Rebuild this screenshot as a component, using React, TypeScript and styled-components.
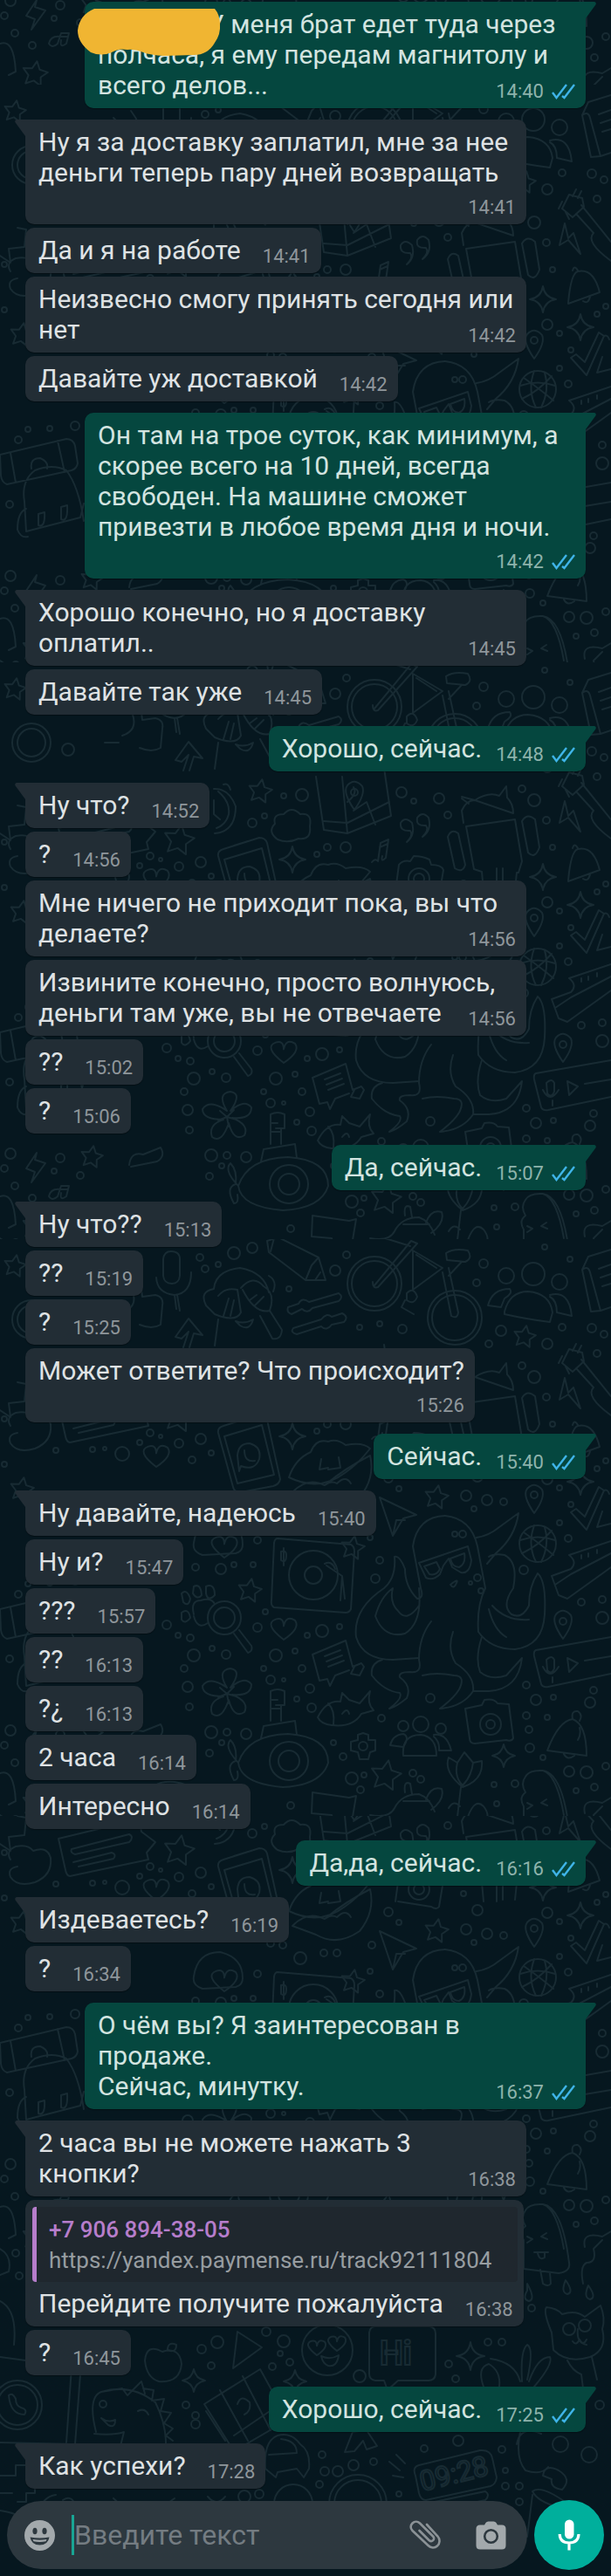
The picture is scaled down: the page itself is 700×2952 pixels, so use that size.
import React from "react";
import styled, { createGlobalStyle, css } from "styled-components";

const color = {
  page: "#06171f",
  doodle: "#182b33",
  incoming: "#222d35",
  outgoing: "#05473f",
  field: "#2d383f",
  accent: "#00af9c",
  ticks: "#3fb4e8",
};

const GlobalStyle = createGlobalStyle`
  *, *::before, *::after { box-sizing: border-box; }
  body {
    margin: 0;
    background: ${color.page};
    font-family: Roboto, "Noto Sans", sans-serif;
  }
`;

const Screen = styled.div`
  position: relative;
  isolation: isolate;
  overflow: hidden;
  padding: 2px 0 7px;
`;

const WallpaperLayer = styled.svg`
  position: absolute;
  inset: 0;
  z-index: -1;
  width: 100%;
  height: 100%;
`;

const Thread = styled.ol`
  list-style: none;
  margin: 0;
  padding: 0 29px;
`;

const Row = styled.li<{ $out?: boolean; $first?: boolean }>`
  display: flex;
  justify-content: ${(p) => (p.$out ? "flex-end" : "flex-start")};
  margin-top: ${(p) => (p.$first ? 13 : 4)}px;

  &:first-child {
    margin-top: 0;
  }
`;

const Bubble = styled.div<{ $out?: boolean; $first?: boolean }>`
  position: relative;
  max-width: 574px;
  padding: 8px 12px 6px 15px;
  border-radius: 10px;
  background: ${(p) => (p.$out ? color.outgoing : color.incoming)};
  color: ${(p) => (p.$out ? "#d3e4e0" : "#dfe2e4")};
  font-size: 30px;
  line-height: 35px;
  box-shadow: 0 1px 1px rgba(0, 0, 0, 0.35);
  ${(p) =>
    p.$first &&
    (p.$out
      ? css`
          border-top-right-radius: 0;
        `
      : css`
          border-top-left-radius: 0;
        `)}
`;

const Text = styled.span`
  white-space: pre-line;
`;

const TailShape = styled.svg<{ $out?: boolean }>`
  position: absolute;
  top: 0;
  ${(p) => (p.$out ? "left: 100%;" : "right: 100%;")}
`;

const Stamp = styled.span<{ $out?: boolean; $below?: boolean }>`
  display: flex;
  justify-content: flex-end;
  gap: 9px;
  ${(p) =>
    p.$below
      ? css`
          padding-top: 10px;
        `
      : css`
          float: right;
          padding-top: 12px;
          margin-left: ${p.$out ? 16 : 25}px;
        `}
  color: ${(p) => (p.$out ? "#8eb3ac" : "#8f969b")};
  font-size: 22px;
  line-height: 26px;
`;

const TicksIcon = styled.svg`
  margin-top: 4px;
`;

const Redaction = styled.span`
  position: relative;
  display: inline-block;
  width: 126px;
  height: 20px;
`;

const RedactionShape = styled.svg`
  position: absolute;
  left: -24px;
  top: -9px;
  z-index: 1;
`;

const Quote = styled.blockquote`
  margin: 0 -5px 7px -7px;
  padding: 9px 14px 7px;
  border-left: 5px solid #b67dcb;
  border-radius: 4px;
  background: #1f272e;
  color: #979da1;
  font-size: 26px;
`;

const QuoteAuthor = styled.cite`
  display: block;
  color: #b67dcb;
  font-style: normal;
  font-weight: 500;
`;

const QuoteLink = styled.a`
  display: block;
  color: inherit;
  text-decoration: none;
`;

const Composer = styled.form`
  display: flex;
  align-items: center;
  gap: 8px;
  padding: 13px 8px 0;
`;

const Field = styled.div`
  flex: 1;
  min-width: 0;
  height: 78px;
  display: flex;
  align-items: center;
  padding: 0 24px 0 20px;
  border-radius: 39px;
  background: ${color.field};
`;

const IconButton = styled.button`
  display: flex;
  flex: none;
  margin: 0;
  padding: 0;
  border: 0;
  background: none;
  color: #a3a9ac;
`;

const AttachButton = styled(IconButton)`
  margin-right: 40px;
`;

const Caret = styled.span`
  flex: none;
  width: 3px;
  height: 46px;
  margin-left: 19px;
  background: #19a594;
`;

const MessageInput = styled.input`
  flex: 1;
  min-width: 0;
  height: 46px;
  padding: 0;
  border: 0;
  outline: 0;
  background: none;
  color: #dfe2e4;
  font: 32px/46px Roboto, "Noto Sans", sans-serif;

  &::placeholder {
    color: #747c82;
    opacity: 1;
  }
`;

const VoiceButton = styled(IconButton)`
  width: 80px;
  height: 80px;
  align-items: center;
  justify-content: center;
  border-radius: 50%;
  background: ${color.accent};
  color: #fff;
`;

type Message = {
  text: string;
  time: string;
  out?: boolean;
  first?: boolean;
  below?: boolean;
  redacted?: boolean;
  quote?: { author: string; link: string };
};

const messages: Message[] = [
  { text: "У меня брат едет туда через полчаса, я ему передам магнитолу и всего делов...", time: "14:40", out: true, first: true, redacted: true },
  { text: "Ну я за доставку заплатил, мне за нее деньги теперь пару дней возвращать", time: "14:41", first: true, below: true },
  { text: "Да и я на работе", time: "14:41" },
  { text: "Неизвесно смогу принять сегодня или нет", time: "14:42" },
  { text: "Давайте уж доставкой", time: "14:42" },
  { text: "Он там на трое суток, как минимум, а скорее всего на 10 дней, всегда свободен. На машине сможет привезти в любое время дня и ночи.", time: "14:42", out: true, first: true, below: true },
  { text: "Хорошо конечно, но я доставку оплатил..", time: "14:45", first: true },
  { text: "Давайте так уже", time: "14:45" },
  { text: "Хорошо, сейчас.", time: "14:48", out: true, first: true },
  { text: "Ну что?", time: "14:52", first: true },
  { text: "?", time: "14:56" },
  { text: "Мне ничего не приходит пока, вы что делаете?", time: "14:56" },
  { text: "Извините конечно, просто волнуюсь, деньги там уже, вы не отвечаете", time: "14:56" },
  { text: "??", time: "15:02" },
  { text: "?", time: "15:06" },
  { text: "Да, сейчас.", time: "15:07", out: true, first: true },
  { text: "Ну что??", time: "15:13", first: true },
  { text: "??", time: "15:19" },
  { text: "?", time: "15:25" },
  { text: "Может ответите? Что происходит?", time: "15:26", below: true },
  { text: "Сейчас.", time: "15:40", out: true, first: true },
  { text: "Ну давайте, надеюсь", time: "15:40", first: true },
  { text: "Ну и?", time: "15:47" },
  { text: "???", time: "15:57" },
  { text: "??", time: "16:13" },
  { text: "?¿", time: "16:13" },
  { text: "2 часа", time: "16:14" },
  { text: "Интересно", time: "16:14" },
  { text: "Да,да, сейчас.", time: "16:16", out: true, first: true },
  { text: "Издеваетесь?", time: "16:19", first: true },
  { text: "?", time: "16:34" },
  { text: "О чём вы? Я заинтересован в продаже.\nСейчас, минутку.", time: "16:37", out: true, first: true },
  { text: "2 часа вы не можете нажать 3 кнопки?", time: "16:38", first: true },
  {
    text: "Перейдите получите пожалуйста",
    time: "16:38",
    quote: { author: "+7 906 894-38-05", link: "https://yandex.paymense.ru/track92111804" },
  },
  { text: "?", time: "16:45" },
  { text: "Хорошо, сейчас.", time: "17:25", out: true, first: true },
  { text: "Как успехи?", time: "17:28", first: true },
];

function Tail({ out }: { out?: boolean }) {
  return (
    <TailShape $out={out} width="12" height="19" viewBox="0 0 12 19" aria-hidden="true">
      {out ? (
        <path d="M0 0H10Q13 1 11 4L0 19Z" fill={color.outgoing} />
      ) : (
        <path d="M12 0H2Q-1 1 1 4L12 19Z" fill={color.incoming} />
      )}
    </TailShape>
  );
}

function Ticks() {
  return (
    <TicksIcon width="27" height="18" viewBox="0 0 27 18" fill="none" stroke={color.ticks} strokeWidth="2.4" role="img" aria-label="Прочитано">
      <path d="M1 10L5.5 16L17 1" />
      <path d="M12 14L14.500 16L26 1" />
    </TicksIcon>
  );
}

function MessageRow({ message }: { message: Message }) {
  const { text, time, out, first, below, redacted, quote } = message;
  return (
    <Row $out={out} $first={first}>
      <Bubble $out={out} $first={first}>
        {first && <Tail out={out} />}
        {quote && (
          <Quote>
            <QuoteAuthor>{quote.author}</QuoteAuthor>
            <QuoteLink href={quote.link}>{quote.link}</QuoteLink>
          </Quote>
        )}
        {redacted && (
          <Redaction>
            <RedactionShape width="166" height="56" viewBox="0 0 166 56" aria-hidden="true">
              <path
                d="M20 1H158Q164 8 164 19Q165 30 158 40Q150 54 134 54L100 55Q84 54 76 51Q66 47 58 48Q48 46 40 51Q28 56 16 51Q1 40 1 26Q3 8 20 1Z"
                fill="#f0b532"
              />
            </RedactionShape>
          </Redaction>
        )}
        <Text>{text}</Text>
        <Stamp $out={out} $below={below}>
          <time>{time}</time>
          {out && <Ticks />}
        </Stamp>
      </Bubble>
    </Row>
  );
}

/* Dots sprinkled between the doodles: x, y, radius. */
const dots: [number, number, number][] = [
  [268, 16, 7], [289, 10, 6], [229, 21, 4], [235, 34, 4], [250, 29, 3], [384, 36, 6], [397, 18, 4], [331, 57, 3],
  [574, 105, 6], [627, 120, 6], [644, 101, 4], [678, 102, 5], [560, 120, 4], [461, 103, 5], [435, 97, 3], [412, 101, 3],
  [546, 50, 4], [554, 28, 5], [653, 23, 3], [624, 9, 3], [692, 109, 4], [684, 131, 4], [598, 145, 4], [612, 158, 7],
  [346, 152, 7], [325, 153, 3], [460, 149, 6], [503, 156, 6], [474, 159, 3], [513, 175, 4], [626, 181, 4], [289, 184, 5],
  [303, 176, 3], [375, 212, 4], [396, 212, 6], [363, 220, 3], [633, 212, 3], [172, 222, 4], [205, 234, 5], [230, 229, 6],
  [184, 226, 2], [160, 233, 3], [64, 242, 3], [106, 241, 3], [120, 240, 2], [140, 246, 8], [220, 253, 4], [5, 206, 3],
  [5, 258, 3], [242, 245, 3], [531, 253, 3], [547, 272, 6], [627, 275, 6], [684, 263, 3], [694, 254, 3], [641, 285, 3],
  [445, 274, 5], [457, 286, 3], [534, 294, 6], [558, 299, 6], [577, 301, 4], [543, 309, 3], [654, 304, 3], [426, 312, 4],
  [344, 327, 7], [371, 321, 4], [386, 321, 4], [310, 310, 4], [324, 312, 4], [295, 345, 4], [641, 325, 3], [651, 343, 4],
  [424, 342, 3], [435, 368, 4], [430, 389, 5], [224, 376, 4], [253, 378, 6], [268, 373, 3], [290, 373, 3], [600, 379, 5],
  [547, 388, 4], [539, 394, 2], [551, 403, 3], [32, 395, 3], [57, 394, 3], [86, 391, 5], [21, 407, 4], [690, 413, 4],
  [666, 416, 4], [304, 427, 3], [295, 445, 5], [369, 449, 7], [389, 444, 3], [352, 454, 3], [191, 442, 5], [204, 454, 3],
  [218, 457, 4], [690, 434, 7], [11, 481, 4], [222, 477, 7], [243, 469, 3], [259, 476, 5], [316, 477, 7], [338, 472, 3],
  [211, 492, 4], [302, 492, 3], [346, 492, 4], [310, 505, 5], [325, 505, 2], [215, 513, 6], [355, 515, 5], [340, 527, 3],
  [357, 537, 5], [217, 536, 4], [493, 526, 5], [603, 511, 4], [614, 528, 6], [634, 525, 3], [680, 517, 4], [676, 531, 6],
  [603, 546, 4], [627, 548, 3], [437, 549, 4], [606, 562, 4], [607, 583, 5], [622, 594, 3], [242, 565, 7], [260, 565, 4],
  [282, 567, 6], [254, 577, 3], [240, 589, 4], [382, 577, 3], [393, 593, 4], [403, 618, 7], [417, 614, 3], [413, 631, 4],
  [473, 612, 4], [482, 619, 4], [566, 625, 3], [590, 624, 4], [569, 647, 3], [652, 610, 6], [672, 611, 7], [660, 632, 3],
  [681, 628, 4], [694, 604, 4], [333, 649, 4], [12, 563, 6], [5, 580, 4], [62, 583, 3], [69, 568, 5], [17, 600, 4],
  [37, 614, 4], [92, 588, 4], [18, 665, 4], [22, 691, 4], [609, 728, 4], [249, 767, 7], [231, 775, 5], [305, 755, 5],
  [325, 766, 7], [321, 780, 3], [242, 794, 4], [312, 795, 4], [332, 790, 4], [559, 767, 4], [575, 767, 4], [514, 792, 4],
  [522, 809, 4], [412, 806, 7], [213, 839, 4], [224, 851, 4], [224, 861, 5], [687, 839, 5], [525, 880, 6], [486, 889, 4],
  [575, 890, 4], [642, 884, 9], [675, 896, 9], [369, 896, 4], [405, 908, 6], [428, 904, 4], [372, 915, 5], [387, 915, 6],
  [579, 914, 3], [579, 932, 4], [595, 932, 4], [366, 930, 4], [457, 941, 3], [280, 944, 7], [297, 941, 5], [595, 950, 4],
];

const starPath = (x: number, y: number, r: number) => {
  const points = Array.from({ length: 10 }, (_, i) => {
    const radius = i % 2 ? r * 0.5 : r;
    const angle = (i * Math.PI) / 5 - 1.4;
    return `${(x + radius * Math.cos(angle)).toFixed(1)} ${(y + radius * Math.sin(angle)).toFixed(1)}`;
  });
  return `M${points.join("L")}Z`;
};

const sparklePath = (x: number, y: number, r: number) =>
  `M${x} ${y - r}Q${x + 2} ${y - 2} ${x + r} ${y}Q${x + 2} ${y + 2} ${x} ${y + r}Q${x - 2} ${y + 2} ${x - r} ${y}Q${x - 2} ${y - 2} ${x} ${y - r}Z`;

const heartPath = (x: number, y: number, r: number) =>
  `M${x} ${y + r}Q${x - r * 1.8} ${y - r * 0.4} ${x - r * 0.7} ${y - r * 0.8}Q${x} ${y - r} ${x} ${y - r * 0.2}Q${x + r * 0.2} ${y - r * 1.2} ${x + r} ${y - r * 0.7}Q${x + r * 1.5} ${y} ${x} ${y + r}Z`;

const pinPath = (x: number, y: number) => `M${x} ${y + 18}Q${x - 14} ${y - 2} ${x - 8} ${y - 10}Q${x} ${y - 19} ${x + 9} ${y - 9}Q${x + 13} ${y} ${x} ${y + 18}Z`;

const stars: [number, number, number][] = [
  [601, 112, 13], [298, 148, 14], [205, 204, 18], [500, 296, 14], [404, 354, 14], [286, 403, 14], [442, 615, 18], [105, 567, 13],
  [17, 31, 13], [40, 647, 15], [25, 287, 14],
];
const sparkles: [number, number, number][] = [
  [335, 226, 15], [622, 246, 15], [665, 278, 15], [577, 592, 13], [539, 783, 16], [222, 811, 13], [338, 812, 13],
];
const hearts: [number, number, number][] = [
  [179, 248, 13], [325, 446, 13], [257, 352, 13], [363, 773, 9], [386, 768, 9],
];

/* Line drawings of the chat wallpaper. */
const doodles = [
  // microphone, crayon, monkey, sliders
  "M187 23Q188 14 196 14Q206 14 206 23V42Q205 51 197 51Q188 51 187 42ZM179 44Q180 62 200 64Q219 62 219 38M203 64L206 82M200 64L202 80",
  "M306 2L319 -2L365 21L373 47L350 47L308 15ZM314 -1L310 14M350 47L357 30L365 21M361 47L367 38",
  "M245 57Q247 36 275 33Q303 38 308 61M245 57Q228 60 236 76L246 86Q270 96 276 84L272 58Q258 55 250 65M276 56Q290 40 302 54Q316 62 309 82Q292 86 278 58M250 92L246 122M309 82L323 104Q322 116 312 114L298 88M270 94Q280 98 290 92Q286 106 275 99ZM308 42Q318 48 313 60M256 88L262 68M264 88L268 70M286 70L294 64M292 76L302 66",
  "M330 78L342 74Q346 66 354 72L388 62Q394 66 388 71L358 79Q352 86 346 80L334 86Q328 84 330 78ZM336 102L368 92Q374 84 380 89L392 85Q400 89 394 95L380 98Q374 106 368 100L340 109Q332 107 336 102Z",
  // bicycle
  "M429 53L471 2L478 5L433 55Q427 57 427 49M473 13L507 33L473 58ZM477 18L500 33M507 38L517 88Q524 92 525 84L514 33M511 16Q520 10 536 13Q542 22 533 26L512 24ZM528 27L514 42M466 62Q474 54 478 66Q474 76 466 70ZM464 70L460 78L474 86M438 -2L470 8",
  // people
  "M578 83Q584 60 605 60Q630 62 633 84L630 95Q605 92 578 86ZM559 76Q564 57 584 57Q588 62 578 68L574 78ZM630 64Q652 58 655 88L638 84Q638 70 630 66M447 580Q450 568 462 567Q470 570 462 582ZM462 592Q460 568 482 568Q500 570 500 592ZM497 568Q512 566 517 586L503 586Q504 576 497 570",
  // notebook
  "M700 12L674 20L667 35L677 83L688 82L700 78M667 35Q674 30 676 38L688 82M686 34L700 29M688 44L700 40M690 54L700 51",
  // arrow, thumb
  "M201 112L216 91L232 110L222 108L217 124M201 112L208 114L216 106L210 124M150 30Q162 45 163 66L178 64Q188 66 186 76L184 98Q174 104 160 98M130 38L152 60Q158 78 140 84M120 92H136",
  // guitar
  "M644 142L652 126L667 130L669 140L656 152ZM666 138L700 180M660 148L680 170Q670 180 700 202M656 128L660 120M662 130L666 122M648 146L652 154M644 134L640 142",
  // android
  "M531 184L529 170Q534 158 544 158L529 154M544 158Q560 148 572 153L580 142L581 155Q588 162 588 173ZM529 156L537 162M534 188L590 180L598 228L594 241H592L590 260M534 188L543 237L552 240L554 262M569 236V262M576 236V260M513 200Q517 190 525 196L533 232Q530 242 521 236ZM598 182Q604 172 613 180L618 212Q613 226 605 218Z",
  "M647 159L641 184L651 178L665 194L657 170L651 176Z",
  "M651 250Q654 216 662 214Q680 210 687 238L651 251M656 213Q658 206 662 213M668 248Q674 252 676 243M627 586Q640 552 656 550Q672 556 672 592ZM656 550Q654 540 662 541Q668 545 664 552M646 590Q650 598 658 592M664 560Q666 568 662 574",
  // map
  "M362 131L371 192L398 196L448 176L440 121M371 182L398 184L446 160M392 131L398 196M405 170L420 160L430 186M398 160Q410 150 405 143",
  // phone
  "M250 222Q249 216 256 214L297 201Q304 201 306 207L321 275Q320 281 313 283L276 290Q268 290 267 284ZM257 226L300 213L314 270L272 280ZM268 210L284 205M272 248Q273 234 286 234Q300 238 297 252Q292 266 276 260L274 266ZM280 242Q280 256 292 254",
  // cloud and clock
  "M318 203Q306 194 315 185Q312 174 325 174Q334 164 344 174Q358 172 355 188Q357 204 342 202Q330 208 318 203Z",
  "M245 145Q262 144 270 165Q270 194 246 196M250 148Q264 160 262 174Q259 186 248 190M245 158V174L252 180M256 140Q262 138 264 146",
  "M466 206Q474 198 470 193Q458 194 459 184Q464 176 472 184Q476 198 466 206ZM484 200Q492 192 488 187Q476 188 478 178Q484 170 491 178Q495 192 484 200Z",
  "M426 229Q430 224 433 228L436 207L445 203L442 224Q436 230 438 222M435 212L444 208",
  "M70 604Q58 602 56 612Q60 618 66 612L70 600L79 600L76 612Q68 618 70 608M70 604H78",
  // camera
  "M453 262L457 232Q462 226 470 228L474 222Q484 222 492 226L494 232Q506 232 508 238L503 268Q500 272 494 268L456 262M533 538L552 534L555 528Q566 526 570 532L583 533L588 572Q586 576 580 574L544 578Q538 578 538 572Z",
  // lips
  "M331 273Q338 252 356 244Q362 228 376 232Q386 228 396 236Q416 232 424 240Q410 258 395 268Q366 290 331 273ZM335 290Q352 272 372 282Q396 262 424 248Q430 274 412 296Q386 314 362 300ZM368 252L366 264L376 262M376 264L390 262L388 250M372 282Q380 276 386 280Q396 270 402 280",
  // cards
  "M67 190L150 170Q160 168 162 182L178 194L168 206L170 214L80 233Q76 232 75 226ZM82 202L148 185Q154 188 148 194L86 208Q80 206 82 202ZM84 217L128 206Q134 208 130 213L90 222",
  "M12 214Q6 204 18 199Q32 196 38 204Q54 198 58 212Q60 232 40 240Q20 246 12 234Q8 224 20 222",
  "M0 196L12 204L10 188L28 186L30 166L20 164",
  "M435 296L477 316L462 320L450 340ZM450 340L454 322L464 322",
  "M654 313L672 333L692 288Q696 286 698 292M654 313L660 309L670 318L686 284L692 288M684 330L690 312M684 330L700 326",
  // octopus
  "M482 400L473 352Q478 318 510 317Q540 320 547 352L556 400Q546 420 548 450Q562 470 590 470Q622 466 624 430Q626 392 616 383Q606 398 606 420Q598 436 586 430Q574 420 588 400Q594 370 578 362Q566 360 560 364M546 342Q560 340 572 330L594 314Q590 342 568 360L558 372M482 400Q486 412 478 412Q464 398 464 378Q458 362 452 364Q454 388 440 400Q404 424 408 456Q416 482 450 482L480 480M480 400Q484 440 464 452Q440 458 430 432Q436 410 450 400Q446 416 456 426Q466 440 480 420",
  "M494 438Q480 456 480 482Q484 498 470 496Q456 496 458 502Q472 512 466 526Q454 536 446 538Q462 526 458 520Q440 518 426 500Q424 486 438 482M519 450Q512 470 522 486Q544 500 542 518Q530 536 504 538Q520 526 526 516Q534 500 520 500Q500 496 484 500M552 456Q544 480 550 496Q562 506 580 500L598 480Q594 516 560 518L543 518M564 420Q580 438 606 436M560 424Q566 448 580 456",
  "M480 371L536 352L540 368Q538 384 528 382L518 376L514 366L508 374L504 384Q496 392 488 388ZM486 375L500 370L504 378Q500 386 492 384ZM516 366L532 360Q534 372 526 376Q518 376 516 366ZM516 396Q526 388 523 394Q520 402 516 396",
  "M596 345Q616 338 636 345M612 328Q604 350 614 370M624 330Q630 350 620 370M600 336Q620 350 634 362M598 360Q616 352 632 334",
  // turntable
  "M318 343L402 350Q406 352 406 358L402 424Q400 428 396 428L314 422Q310 420 311 414L314 348Q315 343 318 343ZM325 354V374M322 358Q328 356 328 362Q328 372 322 368ZM374 374L392 386L390 414M392 386L395 412M372 372Q380 368 384 378",
  "M222 348Q226 320 252 320Q278 326 278 350Q278 358 270 360L232 362Q220 358 222 348",
  "M222 430Q218 414 230 414Q242 410 246 418M238 440Q226 448 222 432M208 406Q214 400 218 412Q216 422 210 416ZM222 398Q230 394 231 408Q226 414 221 406ZM236 398Q246 394 246 408Q238 416 236 406ZM208 428Q216 422 218 434Q212 442 208 436ZM268 452L284 474Q290 472 288 466L274 448",
  "M358 476L396 460L404 490L414 486L417 490L412 500L402 498L406 490M358 476L366 506L375 504L378 512L384 500L400 494M372 478L390 471M374 484L392 477M376 490L394 483",
  // flower
  "M260 514Q248 494 264 492Q278 494 264 514Q280 500 288 510Q288 524 266 522Q286 530 280 542Q268 550 262 528Q254 552 243 544Q238 530 256 524Q232 524 232 512Q240 500 260 514M260 521L252 514M260 521L268 513M260 521L262 532M260 521L250 525M260 521L271 524",
  // voice message, shoe
  "M700 456L614 471Q611 472 612 478L620 510Q622 514 628 513L700 498M626 482Q632 476 635 482V492Q632 500 627 494ZM622 490Q630 506 640 490M633 502V508M650 480L662 486L652 496ZM670 483L700 478",
  "M652 362L700 346M652 362Q662 370 654 378L632 386L640 408L650 412L700 376M636 396L654 384L700 360M666 366V362M674 364V360M684 360V356",
  // fish and ornament
  "M364 548Q374 528 390 530L392 520L400 528L412 532L424 518Q420 532 428 540L414 544Q404 560 380 557Q368 556 364 548M376 532Q384 540 382 556M392 544Q398 536 400 544",
  "M310 518Q318 514 326 518V534H316M310 518V552M322 534V552M310 528H318M310 538H322M299 572L302 558L338 552L340 568M273 600Q284 568 330 567Q376 570 376 600Q368 626 324 628Q276 624 273 600ZM273 600Q256 582 264 574Q272 582 270 598Q258 602 268 620Q274 620 272 610",
  "M416 566L422 568L422 574L430 574L430 586L424 588L422 596L412 596L410 588L402 586V576L410 574L410 568Z",
  // tulip, ticket, turtle
  "M530 628Q508 610 514 594L524 600L532 588L542 600L552 598Q554 620 530 628ZM524 600Q520 616 530 626M542 600Q540 616 530 626M528 628L524 662M514 652Q520 642 527 650M536 662Q544 640 554 650Q562 660 556 668",
  "M358 634L400 640L408 638L404 662M358 634L357 658L380 660L384 674L392 662M424 660Q446 664 452 652Q460 636 480 636Q492 640 498 656M464 634Q462 620 470 624L472 636M488 642Q494 626 506 630Q510 642 494 654M462 644H492",
  // ice cream
  "M602 616Q606 608 622 609Q644 612 652 676Q654 686 640 688L600 683V650Q594 640 602 634Q596 624 602 616M622 609Q638 614 646 660M604 646L610 649L604 653M626 642L620 646L627 649M612 664H628M616 665Q618 674 624 670V664M619 684L622 700Q628 704 631 700L630 687",
  // backpack
  "M0 424L76 406Q84 406 86 414L89 434Q88 440 82 442L8 458Q2 456 1 448ZM12 422L18 456M66 408L74 444M28 478Q24 454 40 442Q60 434 76 442Q90 460 96 500M30 486Q20 490 20 510Q24 520 32 518M28 478L30 512L92 496L96 480M44 492V505Q52 508 51 490ZM70 484V498Q78 502 77 482ZM36 440Q34 428 46 428Q56 432 54 440",
  "M42 562L30 580L40 584L36 596L52 574L40 570ZM148 576Q150 560 164 564L184 556Q190 566 180 572L150 578",
  "M98 656Q106 632 132 628L164 636M130 640Q150 640 162 650M170 640Q172 620 200 622Q230 626 238 656M176 636Q200 622 214 638",
  "M0 612Q16 606 18 644L10 648M0 660Q14 668 10 686L0 690M0 720Q20 730 16 770M670 658Q666 640 690 646L700 640",
  // cat, plant and chat card
  "M632 756Q622 732 626 727Q638 728 644 735Q660 730 670 738L688 725Q694 740 690 752Q696 776 676 784Q650 792 634 776ZM650 788Q656 800 666 804L668 820M678 784L684 810M656 766Q660 772 664 764Q668 772 672 764",
  "M554 818Q546 796 560 792Q574 800 572 818M562 786Q590 790 596 812M598 812Q596 776 604 770Q612 774 604 810M606 812Q616 784 630 784Q634 792 612 818",
  "M430 749H492Q499 750 499 757V804Q498 811 491 811H456L444 822L440 811H430Q423 810 423 803V756Q424 749 430 749Z",
  // face, play, apple, dinosaur
  "M368 783Q378 788 388 782Q386 796 376 794Q370 792 368 783Z",
  "M272 755L300 773L267 797Z",
  "M186 778Q168 768 166 788Q168 808 182 812Q206 814 208 792Q206 772 186 778ZM192 776Q192 766 202 770Q202 780 192 776",
  "M110 870Q100 830 116 824Q150 814 178 836Q190 860 190 883M116 824L140 820L146 828L162 812L166 826M164 820L176 822L174 834L188 832L184 846L196 848L188 860L198 866L190 874L198 880M116 854Q124 860 132 856Q132 866 124 862ZM108 872Q130 874 142 870L138 886M158 846Q166 842 170 850",
  "M0 784L88 796Q92 798 92 804L86 884L0 882M82 796L76 882M10 828Q12 850 28 850Q32 844 24 842Q18 840 18 832Q14 824 10 828",
  "M234 838L298 798L330 856L268 892ZM252 822L284 880M278 806L310 868M272 838Q276 826 286 836Q288 846 280 850M268 874L318 840M258 880L236 846",
  "M304 912Q302 880 318 874Q334 870 344 884Q356 892 354 912L348 922L340 912L318 916L316 922ZM308 896L340 894Q340 880 322 878",
  "M395 893L404 870L420 868L432 886L420 890L416 880L406 892Z",
  "M476 920Q472 910 480 908L550 891Q562 890 564 900L569 922Q568 930 562 932L488 948Q482 948 480 940ZM488 952L556 938Q562 942 556 948L510 958M446 904L458 914M450 920L462 922M454 896L464 906",
  // basket and blobs along the lower edge
  "M610 938Q620 930 650 952Q650 960 640 956Q616 950 610 938ZM610 942L604 990M596 870Q590 900 602 914Q620 920 628 910M622 920Q624 906 640 914Q656 924 644 936Q630 934 632 924ZM662 752Q660 768 672 770M592 884Q596 862 620 872",
  "M0 920H18V908H30V922H40V940H30V950H20M0 940H14M0 960Q30 964 30 980M44 964Q48 944 64 942M72 948Q84 940 88 960M130 946Q160 976 200 946M238 944Q248 956 258 944M250 952V980",
  "M668 700Q664 680 672 676Q684 676 680 660L690 650M604 708Q598 718 606 720Q614 718 604 700ZM648 696Q642 710 650 712Q658 710 648 696ZM674 702Q668 716 676 718Q684 716 674 702Z",
];

const rings: [number, number, number][] = [
  [429, 51, 31], [429, 51, 26], [521, 90, 31], [521, 90, 26], [611, 40, 13], [580, 42, 9], [641, 49, 9], [480, 248, 12],
  [480, 248, 6], [359, 385, 28], [359, 385, 10], [616, 349, 21], [257, 434, 19], [257, 434, 12], [331, 598, 22],
  [331, 598, 12], [416, 581, 5], [482, 556, 9], [462, 558, 6], [505, 561, 6], [562, 556, 12], [562, 556, 5], [375, 776, 29],
  [20, 839, 28], [20, 839, 23], [410, 952, 33], [410, 952, 27], [336, 952, 22], [652, 752, 7], [670, 748, 7], [118, 838, 4],
  [612, 293, 4], [645, 438, 4], [406, 149, 4], [521, 338, 3], [530, 338, 4], [36, 92, 22], [36, 92, 16], [78, 100, 7],
];

function Wallpaper() {
  return (
    <WallpaperLayer aria-hidden="true">
      <defs>
        <g id="doodles" fill="none" stroke={color.doodle} strokeWidth="2" strokeLinejoin="round" strokeLinecap="round">
          {doodles.map((d, i) => (
            <path key={i} d={d} />
          ))}
          {stars.map(([x, y, r], i) => (
            <path key={i} d={starPath(x, y, r)} />
          ))}
          {sparkles.map(([x, y, r], i) => (
            <path key={i} d={sparklePath(x, y, r)} />
          ))}
          {hearts.map(([x, y, r], i) => (
            <path key={i} d={heartPath(x, y, r)} />
          ))}
          <path d={pinPath(612, 296)} />
          <path d={pinPath(645, 440)} />
          <path d={pinPath(406, 151)} />
          {[...rings, ...dots].map(([x, y, r], i) => (
            <circle key={i} cx={x} cy={y} r={r} />
          ))}
        </g>
      </defs>
      <svg y="0" width="100%" height="97" overflow="hidden">
        <use href="#doodles" y="-562" />
      </svg>
      <svg y="97" width="100%" height="662" overflow="hidden">
        <use href="#doodles" />
      </svg>
      <svg y="759" width="100%" height="661" overflow="hidden">
        <use href="#doodles" />
      </svg>
      <svg y="1420" width="100%" height="661" overflow="hidden">
        <use href="#doodles" />
      </svg>
      <svg y="2081" width="100%" height="871" overflow="hidden">
        <use href="#doodles" y="-164" />
        <g fill="none" stroke={color.doodle} strokeWidth="2">
          <text x="435" y="629" fontSize="38" fontWeight="700">Hi</text>
          <text x="484" y="774" fontSize="32" transform="rotate(-14 484 774)">09:28</text>
        </g>
      </svg>
    </WallpaperLayer>
  );
}

function SmileIcon() {
  return (
    <svg width="35" height="35" viewBox="0 0 35 35" aria-hidden="true">
      <circle cx="17.500" cy="17.500" r="17.500" fill="currentColor" />
      <g fill={color.field}>
        <ellipse cx="12" cy="12.500" rx="2.600" ry="3.800" />
        <ellipse cx="23" cy="12.500" rx="2.600" ry="3.800" />
        <path d="M6.500 19.500Q17.500 21.500 28.500 19.500Q27 28.500 17.500 28.500Q8 28.500 6.500 19.500Z" />
      </g>
      <path d="M9.500 22Q17.500 23.500 25.500 22L24.500 24.200Q17.500 25.600 10.500 24.200Z" fill="currentColor" />
    </svg>
  );
}

function ClipIcon() {
  return (
    <svg width="36" height="34" viewBox="0 0 36 34" fill="none" stroke="#8b9296" strokeWidth="2.600" strokeLinecap="round" aria-hidden="true">
      <path d="M20 5L32.500 18.500C35.500 22 35 27 32 29.500C29 32.500 24.500 32 21.500 29L3.500 12C1 9.500 1 6 3.500 3.500C6 1 9.500 1.200 12 3.500L27 18.500C28.500 20 28.500 22 27 23.200C25.800 24.500 24 24.300 22.500 23L11.500 12" />
    </svg>
  );
}

function CameraIcon() {
  return (
    <svg width="35" height="33" viewBox="0 0 35 33" aria-hidden="true">
      <path
        d="M10 4.500L11.500 2Q12.500 0.500 14.500 0.500H20.500Q22.500 0.500 23.500 2L25 4.500H30Q34.500 4.500 34.500 9V28Q34.500 32.500 30 32.500H5Q0.500 32.500 0.500 28V9Q0.500 4.500 5 4.500Z"
        fill="currentColor"
      />
      <circle cx="17.500" cy="17.500" r="7.300" fill="none" stroke={color.field} strokeWidth="2.600" />
    </svg>
  );
}

function MicIcon() {
  return (
    <svg width="26" height="36" viewBox="0 0 26 36" aria-hidden="true">
      <rect x="8" y="0.500" width="10.500" height="22" rx="5.200" fill="currentColor" />
      <path d="M2.200 17Q2.500 27 13 27Q23.500 27 24 17M13 27V35.500" fill="none" stroke="currentColor" strokeWidth="3.200" />
    </svg>
  );
}

export default function App() {
  return (
    <>
      <GlobalStyle />
      <Screen>
        <Wallpaper />
        <Thread>
          {messages.map((message, i) => (
            <MessageRow key={i} message={message} />
          ))}
        </Thread>
        <Composer onSubmit={(e: React.FormEvent) => e.preventDefault()}>
          <Field>
            <IconButton type="button" aria-label="Эмодзи">
              <SmileIcon />
            </IconButton>
            <Caret />
            <MessageInput type="text" placeholder="Введите текст" aria-label="Введите текст" />
            <AttachButton type="button" aria-label="Прикрепить">
              <ClipIcon />
            </AttachButton>
            <IconButton type="button" aria-label="Камера">
              <CameraIcon />
            </IconButton>
          </Field>
          <VoiceButton type="button" aria-label="Голосовое сообщение">
            <MicIcon />
          </VoiceButton>
        </Composer>
      </Screen>
    </>
  );
}
